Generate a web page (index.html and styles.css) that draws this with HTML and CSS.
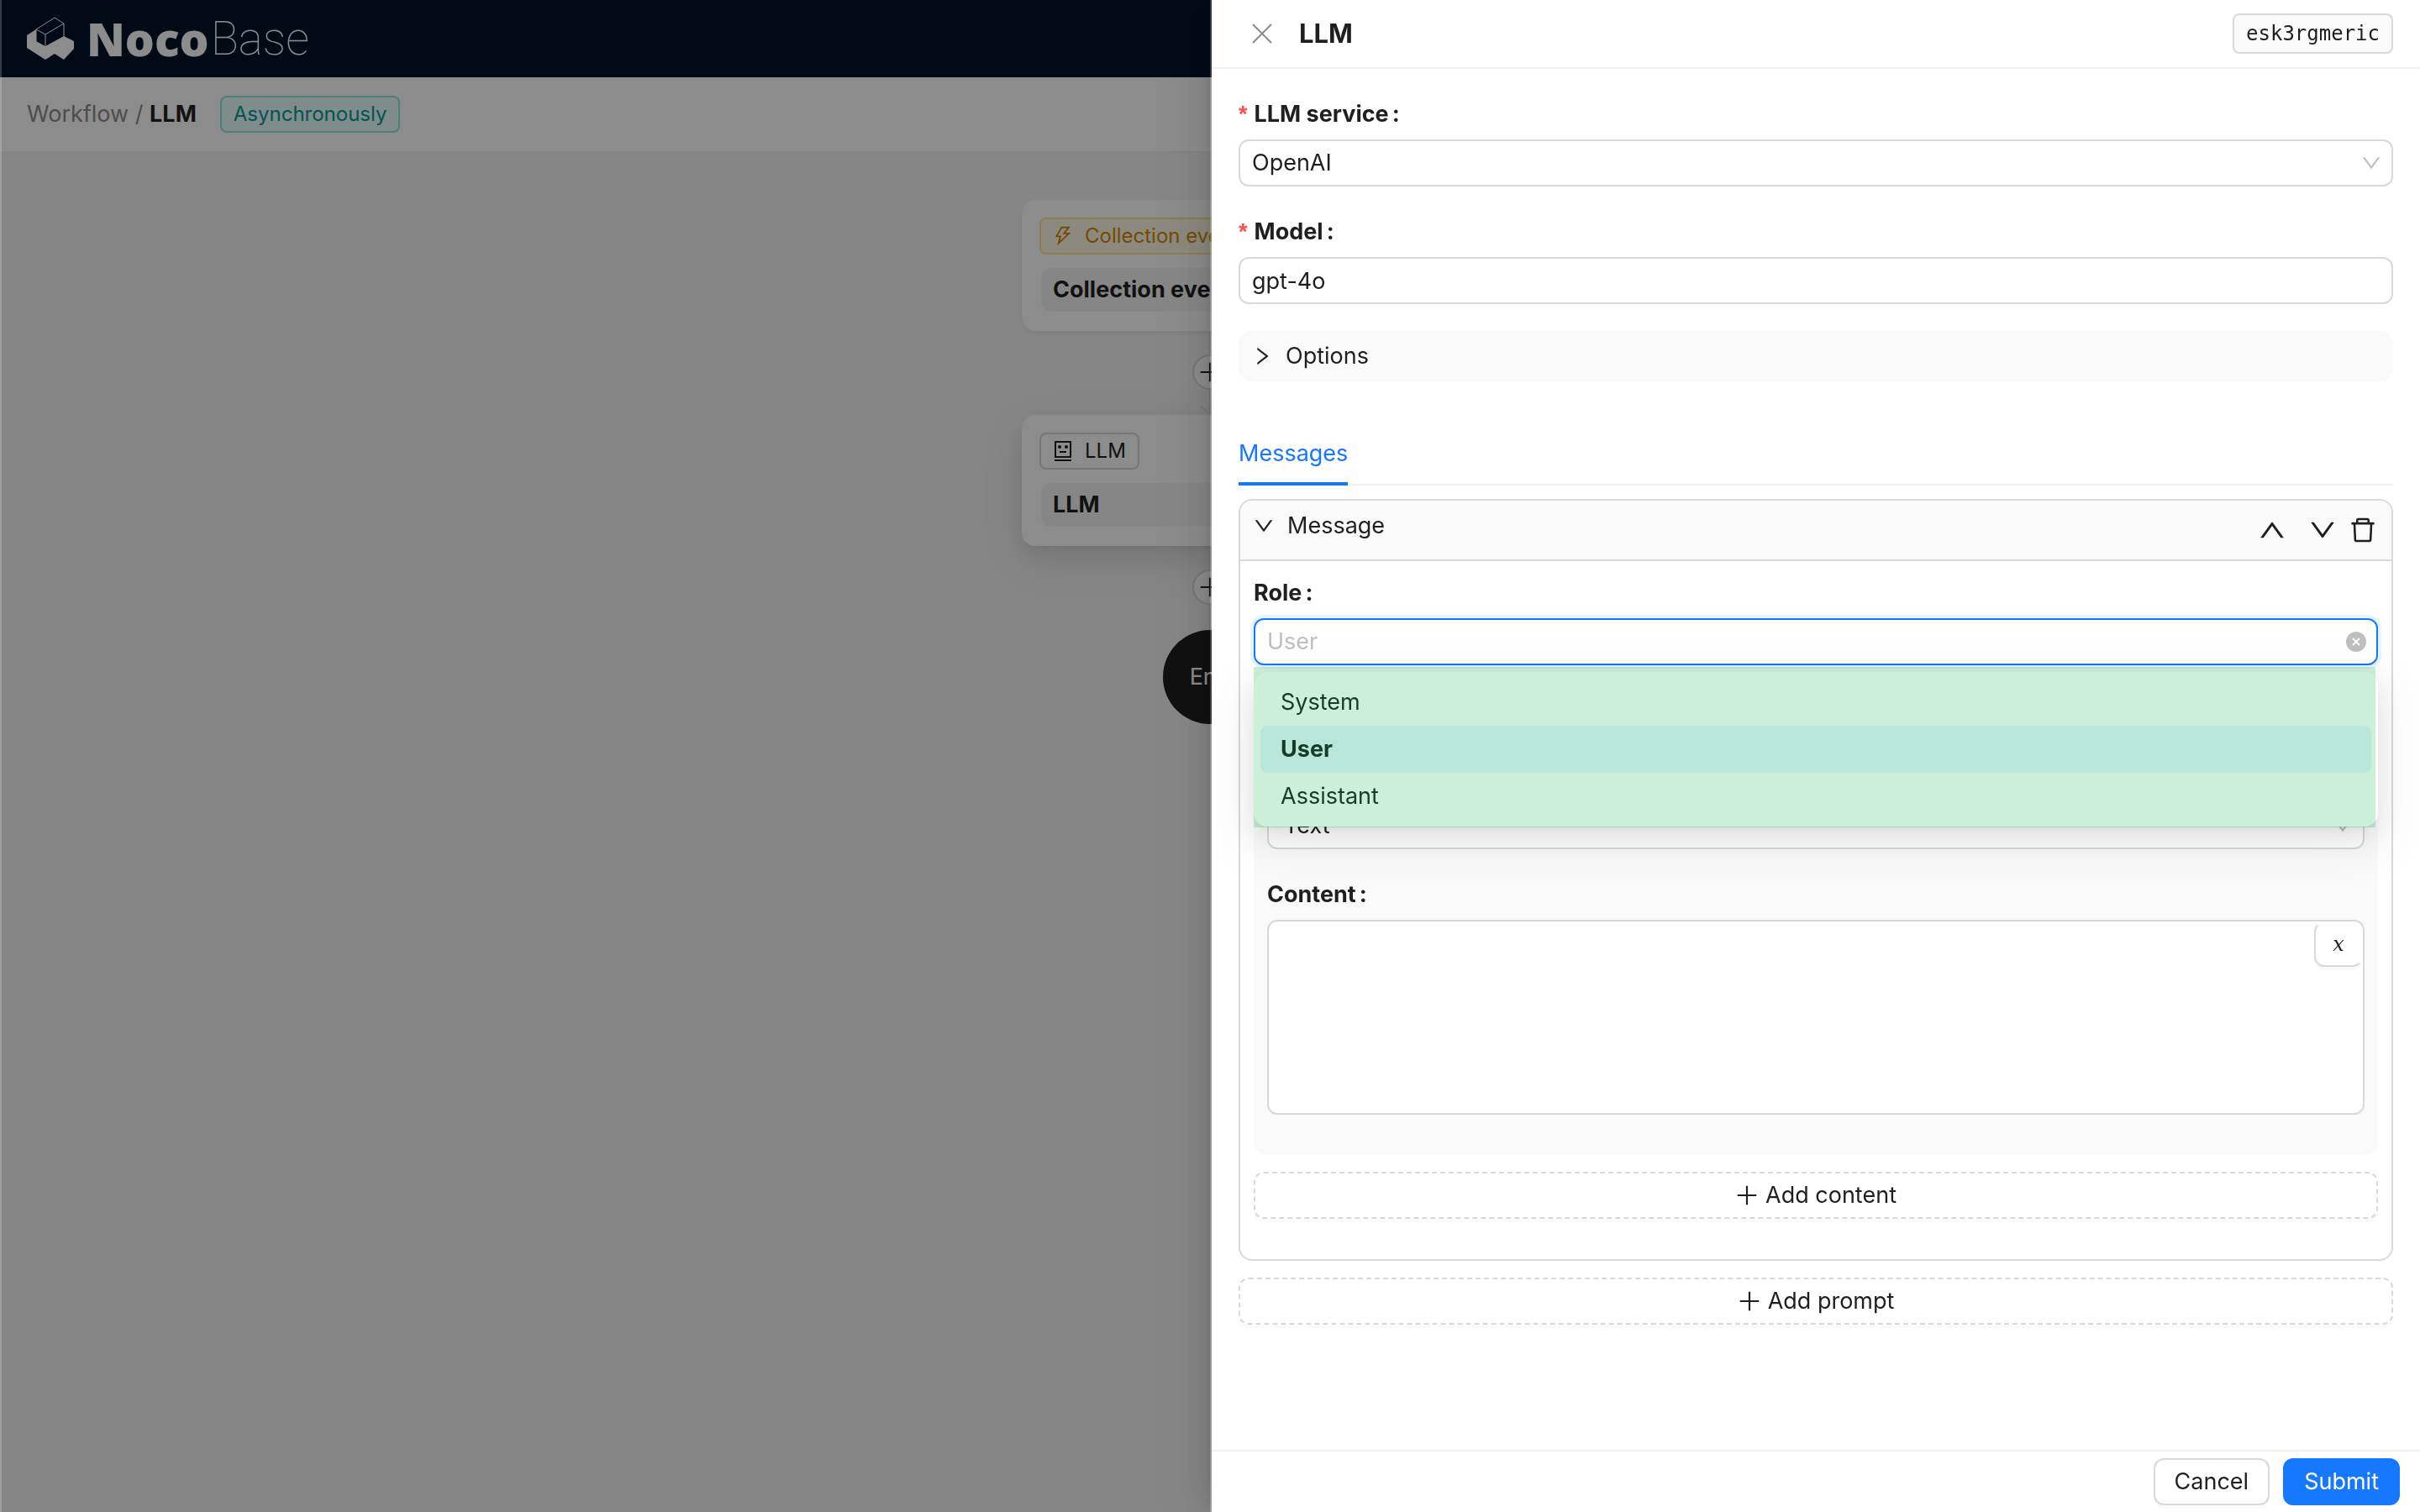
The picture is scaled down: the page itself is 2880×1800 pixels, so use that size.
FILE: index.html
```html
<!DOCTYPE html>
<html lang="en">
<head>
    <meta charset="UTF-8">
    <meta name="viewport" content="width=device-width, initial-scale=1.0">
    <title>NocoBase - LLM</title>
    <link rel="stylesheet" href="styles.css">
</head>
<body>
    <!-- icons shared by the page -->
    <svg class="sprite" aria-hidden="true">
        <symbol id="icon-down" viewBox="64 64 896 896"><path d="M884 256h-75c-5.1 0-9.9 2.5-12.9 6.6L512 654.2 227.9 262.6c-3-4.1-7.8-6.6-12.9-6.6h-75c-6.5 0-10.3 7.4-6.5 12.7l352.6 486.1c12.8 17.6 39 17.6 51.7 0l352.6-486.1c3.9-5.3.1-12.7-6.4-12.7z"/></symbol>
        <symbol id="icon-up" viewBox="64 64 896 896"><path d="M890.5 755.3L537.9 269.2c-12.8-17.6-39-17.6-51.7 0L133.5 755.3A8 8 0 00140 768h75c5.1 0 9.9-2.5 12.9-6.6L512 369.8l284.1 391.6c3 4.1 7.8 6.6 12.9 6.6h75c6.5 0 10.3-7.4 6.5-12.7z"/></symbol>
        <symbol id="icon-right" viewBox="64 64 896 896"><path d="M765.7 486.8L314.9 134.7A7.97 7.97 0 00302 141v77.3c0 4.9 2.3 9.6 6.1 12.6l360 281.1-360 281.1c-3.9 3-6.1 7.7-6.1 12.6V883c0 6.7 7.7 10.4 12.9 6.3l450.8-352.1a31.96 31.96 0 000-50.4z"/></symbol>
        <symbol id="icon-plus" viewBox="64 64 896 896"><path d="M477 152h70v720h-70zM152 477h720v70H152z"/></symbol>
        <symbol id="icon-delete" viewBox="64 64 896 896"><path d="M360 184h-8c4.4 0 8-3.6 8-8v8h304v-8c0 4.4 3.6 8 8 8h-8v72h72v-80c0-35.3-28.7-64-64-64H352c-35.3 0-64 28.7-64 64v80h72v-72zm504 72H160c-17.7 0-32 14.3-32 32v32c0 4.4 3.6 8 8 8h60.4l24.7 523c1.6 34.1 29.8 61 63.9 61h454c34.2 0 62.3-26.8 63.9-61l24.7-523H888c4.4 0 8-3.6 8-8v-32c0-17.7-14.3-32-32-32zM731.3 840H292.7l-24.2-512h487l-24.2 512z"/></symbol>
        <symbol id="icon-thunder" viewBox="64 64 896 896"><path d="M848 359.3H627.7L825.8 109c4.1-5.3.4-13-6.3-13H436c-2.8 0-5.5 1.5-6.9 4L170 547.5c-3.1 5.3.7 12 6.9 12h174.4l-89.4 357.6c-1.9 7.8 7.5 13.3 13.3 7.7L853.5 373c5.2-4.9 1.7-13.7-5.5-13.7zM378.2 732.5l60.3-241H281.1l189.6-327.4h224.6L487 427.4h211L378.2 732.5z"/></symbol>
    </svg>

    <div class="page">
        <header class="topbar">
            <svg class="logo-mark" viewBox="0 0 58 52">
                <path d="M1 22L12 15V29L23 35L45 23L57 29V38L45 51L34 44L23 51L1 37Z" fill="#fff"/>
                <path d="M12 15L34 1L45 8L23 21Z M12 15V29 M23 21V35 M45 8V23" fill="none" stroke="#fff" stroke-width="1"/>
            </svg>
            <div class="logo-text"><b>Noco</b><span>Base</span></div>
        </header>

        <div class="toolbar">
            <nav class="breadcrumb"><a href="#">Workflow</a> / <strong>LLM</strong></nav>
            <span class="tag tag-cyan">Asynchronously</span>
        </div>

        <main class="canvas">
            <div class="node">
                <span class="tag tag-gold"><svg class="icon"><use href="#icon-thunder"/></svg>Collection event</span>
                <div class="node-title">Collection event</div>
            </div>
            <div class="branch arrow">
                <button class="add" aria-label="Add node"><svg class="icon-md"><use href="#icon-plus"/></svg></button>
            </div>
            <div class="node active">
                <span class="tag">
                    <svg class="icon" viewBox="0 0 24 24">
                        <path d="M3 1H21V19H3Z M2 23H22 M8 13H16" fill="none" stroke="currentColor" stroke-width="2"/>
                        <circle cx="8" cy="7" r="2"/>
                        <circle cx="16" cy="7" r="2"/>
                    </svg>LLM</span>
                <div class="node-title">LLM</div>
            </div>
            <div class="branch">
                <button class="add" aria-label="Add node"><svg class="icon-md"><use href="#icon-plus"/></svg></button>
            </div>
            <div class="end">End</div>
        </main>
    </div>

    <div class="mask"></div>

    <aside class="drawer">
        <div class="drawer-header">
            <button class="close" aria-label="Close">
                <svg viewBox="0 0 32 32"><path d="M5 5L27 27M27 5L5 27" fill="none" stroke="currentColor" stroke-width="2"/></svg>
            </button>
            <h1>LLM</h1>
            <code class="key">esk3rgmeric</code>
        </div>

        <form class="drawer-body">
            <label class="label required" for="service">LLM service</label>
            <div class="select">
                <select id="service"><option>OpenAI</option></select>
                <svg class="icon"><use href="#icon-down"/></svg>
            </div>

            <label class="label required" for="model">Model</label>
            <input class="control" id="model" type="text" value="gpt-4o">

            <button type="button" class="options"><svg class="icon"><use href="#icon-right"/></svg>Options</button>

            <div class="tabs" role="tablist">
                <button type="button" class="tab" role="tab" aria-selected="true">Messages</button>
            </div>

            <section class="card">
                <div class="card-header">
                    <button type="button" class="card-title"><svg class="icon"><use href="#icon-down"/></svg>Message</button>
                    <div class="card-actions">
                        <button type="button" class="move" aria-label="Move up"><svg class="icon-lg"><use href="#icon-up"/></svg></button>
                        <button type="button" class="move" aria-label="Move down"><svg class="icon-lg"><use href="#icon-down"/></svg></button>
                        <button type="button" aria-label="Delete"><svg class="icon-lg"><use href="#icon-delete"/></svg></button>
                    </div>
                </div>
                <div class="card-body">
                    <label class="label" for="role">Role</label>
                    <div class="select focused">
                        <select id="role"><option>User</option></select>
                        <svg class="icon" viewBox="0 0 24 24">
                            <circle cx="12" cy="12" r="12"/>
                            <path d="M8 8L16 16M16 8L8 16" stroke="#fff" stroke-width="2"/>
                        </svg>
                        <div class="dropdown">
                            <ul role="listbox">
                                <li role="option">System</li>
                                <li role="option" aria-selected="true">User</li>
                                <li role="option">Assistant</li>
                            </ul>
                        </div>
                    </div>

                    <div class="panel">
                        <div class="select wide">
                            <select aria-label="Type"><option>Text</option></select>
                            <svg class="icon"><use href="#icon-down"/></svg>
                        </div>
                        <label class="label" for="content">Content</label>
                        <div class="editor">
                            <textarea class="control" id="content"></textarea>
                            <button type="button" class="variable" aria-label="Insert variable">x</button>
                        </div>
                    </div>

                    <button type="button" class="btn dashed"><svg class="icon-md"><use href="#icon-plus"/></svg>Add content</button>
                </div>
            </section>

            <button type="button" class="btn dashed"><svg class="icon-md"><use href="#icon-plus"/></svg>Add prompt</button>
        </form>

        <div class="drawer-footer">
            <button class="btn">Cancel</button>
            <button class="btn primary">Submit</button>
        </div>
    </aside>
</body>
</html>
```
FILE: styles.css
```css
* {
    box-sizing: border-box;
}
body {
    margin: 0;
    font-family: Inter, "Liberation Sans", sans-serif;
    font-size: 27px;
    line-height: 44px;
    color: #1f1f1f;
    background: #f5f5f5;
    overflow: hidden;
}
button,
input,
select,
textarea {
    font: inherit;
    color: inherit;
}
button {
    padding: 0;
    border: none;
    background: none;
    cursor: pointer;
}
svg {
    display: block;
    flex: none;
    fill: currentColor;
}
.sprite {
    position: absolute;
    width: 0;
    height: 0;
}
.icon {
    width: 24px;
    height: 24px;
}
.icon-md {
    width: 28px;
    height: 28px;
}
.icon-lg {
    width: 32px;
    height: 32px;
}

/* page behind the drawer */
.page {
    min-height: 100vh;
    display: flex;
    flex-direction: column;
}
.topbar {
    height: 92px;
    padding: 0 31px;
    display: flex;
    align-items: center;
    gap: 14px;
    background: #001529;
    color: #fff;
}
.logo-mark {
    width: 58px;
    height: 52px;
}
.logo-text {
    display: flex;
    gap: 2px;
    font-size: 55px;
}
.logo-text b {
    font-family: "Open Sans", sans-serif;
    font-weight: 800;
}
.logo-text span {
    font-family: Roboto, sans-serif;
    font-weight: 100;
}
.toolbar {
    height: 90px;
    padding: 0 32px;
    display: flex;
    align-items: center;
    gap: 28px;
    background: #fff;
    border-bottom: 2px solid #f0f0f0;
}
.breadcrumb {
    color: #8c8c8c;
}
.breadcrumb a {
    color: inherit;
    text-decoration: none;
}
.breadcrumb strong {
    color: #1f1f1f;
    font-weight: 700;
}
.tag {
    display: inline-flex;
    align-items: center;
    gap: 16px;
    height: 44px;
    padding: 0 14px;
    border: 2px solid #d9d9d9;
    border-radius: 8px;
    font-size: 24px;
    line-height: 40px;
    white-space: nowrap;
}
.tag-cyan {
    color: #08979c;
    background: #e6fffb;
    border-color: #87e8de;
}
.tag-gold {
    color: #d48806;
    background: #fffbe6;
    border-color: #ffe58f;
}
.canvas {
    flex: 1;
    padding-top: 56px;
    display: flex;
    flex-direction: column;
    align-items: center;
}
.node {
    width: 448px;
    height: 156px;
    padding: 21px;
    border-radius: 16px;
    background: #fff;
    box-shadow: 0 2px 4px rgba(0, 0, 0, 0.03), 0 2px 12px -2px rgba(0, 0, 0, 0.02), 0 4px 8px rgba(0, 0, 0, 0.02);
}
.node.active {
    box-shadow: 0 12px 32px rgba(0, 0, 0, 0.08), 0 6px 12px -8px rgba(0, 0, 0, 0.12), 0 18px 56px 16px rgba(0, 0, 0, 0.05);
}
.node .tag {
    display: flex;
    width: fit-content;
    gap: 14px;
}
.node-title {
    height: 52px;
    margin: 16px 2px 0;
    padding: 0 14px;
    border-radius: 12px;
    background: #f5f5f5;
    font-weight: 700;
    line-height: 52px;
}
.branch {
    height: 100px;
    padding-top: 28px;
    background: linear-gradient(#d9d9d9, #d9d9d9) center / 2px 100% no-repeat;
}
.add {
    display: flex;
    align-items: center;
    justify-content: center;
    width: 42px;
    height: 42px;
    border: 2px solid #d9d9d9;
    border-radius: 50%;
    background: #fff;
}
.arrow::after {
    content: "";
    display: block;
    width: 14px;
    height: 14px;
    margin: 12px auto 0;
    border: solid #d9d9d9;
    border-width: 0 2px 2px 0;
    transform: rotate(45deg);
}
.end {
    width: 112px;
    height: 112px;
    border-radius: 50%;
    background: #1f1f1f;
    color: #fff;
    text-align: center;
    line-height: 112px;
}
.mask {
    position: fixed;
    inset: 0;
    background: rgba(0, 0, 0, 0.45);
    border-left: 2px solid rgba(255, 255, 255, 0.2);
}

/* drawer */
.drawer {
    position: fixed;
    top: 0;
    right: 0;
    bottom: 0;
    width: 50%;
    display: flex;
    flex-direction: column;
    background: #fff;
    background-clip: padding-box;
    border-left: 2px solid rgba(255, 255, 255, 0.2);
    box-shadow: -12px 0 32px rgba(0, 0, 0, 0.08), -6px 0 12px -8px rgba(0, 0, 0, 0.12), -18px 0 56px 16px rgba(0, 0, 0, 0.05);
}
.drawer-header {
    display: flex;
    align-items: center;
    height: 82px;
    padding: 0 32px 0 44px;
    border-bottom: 2px solid #f0f0f0;
}
.close {
    width: 32px;
    height: 32px;
    color: #8c8c8c;
}
.drawer-header h1 {
    flex: 1;
    margin: 0 0 0 28px;
    font-size: 31px;
    font-weight: 700;
}
.key {
    height: 48px;
    padding: 0 14px;
    border: 2px solid #d9d9d9;
    border-radius: 8px;
    background: #fafafa;
    font-family: "DejaVu Sans Mono", monospace;
    font-size: 24px;
    line-height: 44px;
}
.drawer-body {
    flex: 1;
    padding: 32px;
}
.label {
    display: block;
    margin-bottom: 8px;
    font-weight: 700;
}
.label::after {
    content: ":";
    margin-left: 4px;
}
.required::before {
    content: "*";
    display: inline-block;
    margin-right: 8px;
    color: #ff4d4f;
    font-family: "Liberation Sans", sans-serif;
    font-weight: 700;
}
.control,
.select select {
    display: block;
    width: 100%;
    height: 56px;
    padding: 0 14px;
    border: 2px solid #d9d9d9;
    border-radius: 12px;
    background: #fff;
    outline: none;
}
.select {
    display: grid;
    align-items: center;
    position: relative;
    margin-bottom: 32px;
}
.select select,
.select > .icon {
    grid-area: 1 / 1;
}
.select select {
    appearance: none;
}
.select > .icon {
    justify-self: end;
    margin-right: 14px;
    color: #bfbfbf;
    pointer-events: none;
}
.select.wide select {
    padding: 0 18px;
}
.select.focused select {
    border-color: #1677ff;
    box-shadow: 0 0 0 4px rgba(5, 145, 255, 0.1);
    color: #bfbfbf;
}
.options {
    display: flex;
    align-items: center;
    gap: 16px;
    width: 100%;
    height: 60px;
    margin: 32px 0 48px;
    padding: 0 16px;
    border-radius: 16px;
    background: #fafafa;
}
.tabs {
    display: flex;
    margin-bottom: 16px;
    box-shadow: inset 0 -2px #f0f0f0;
}
.tab {
    padding: 16px 0 12px;
    border-bottom: 4px solid #1677ff;
    color: #1677ff;
}
.card {
    border: 2px solid #d9d9d9;
    border-radius: 16px;
}
.card-header {
    display: flex;
    justify-content: space-between;
    align-items: flex-start;
    padding: 8px 18px 8px 16px;
    border-bottom: 2px solid #d9d9d9;
    border-radius: 14px 14px 0 0;
    background: #fafafa;
}
.card-title {
    display: flex;
    align-items: center;
    gap: 16px;
}
.card-actions {
    display: flex;
    align-items: center;
    height: 54px;
    gap: 16px;
}
.card-actions .move:first-child {
    margin-right: 12px;
}
.card-body {
    padding: 16px 16px 48px;
}
.dropdown {
    position: absolute;
    z-index: 1;
    top: 100%;
    left: 0;
    right: 0;
    margin-top: 8px;
    padding: 8px;
    border-radius: 16px;
    background: #fff;
    box-shadow: 0 12px 32px rgba(0, 0, 0, 0.08), 0 6px 12px -8px rgba(0, 0, 0, 0.12), 0 18px 56px 16px rgba(0, 0, 0, 0.05);
}
/* green highlight over the open list */
.dropdown::after {
    content: "";
    position: absolute;
    inset: -6px 3px -1px 0;
    background: rgba(0, 176, 71, 0.2);
    pointer-events: none;
}
.dropdown ul {
    margin: 0;
    padding: 0;
    list-style: none;
}
.dropdown li {
    padding: 6px 24px;
    border-radius: 8px;
}
.dropdown li[aria-selected="true"] {
    background: #e6f4ff;
    font-weight: 700;
}
.panel {
    margin-bottom: 20px;
    padding: 131px 16px 48px;
    border-radius: 16px;
    background: #fafafa;
}
.editor {
    position: relative;
}
.editor textarea {
    height: 232px;
    padding: 8px 22px;
    resize: none;
}
.variable {
    position: absolute;
    top: 2px;
    right: 2px;
    width: 58px;
    height: 54px;
    border: 2px solid #d9d9d9;
    border-top-color: transparent;
    border-right-color: transparent;
    border-radius: 12px;
    background: #fff;
    box-shadow: 0 4px 0 rgba(0, 0, 0, 0.02);
    font-family: "DejaVu Serif", serif;
    font-size: 24px;
    font-style: italic;
}
.btn {
    display: flex;
    align-items: center;
    justify-content: center;
    gap: 8px;
    height: 56px;
    padding: 0 23px;
    border: 2px solid #d9d9d9;
    border-radius: 12px;
    background: #fff;
    box-shadow: 0 4px 0 rgba(0, 0, 0, 0.02);
}
.dashed {
    width: 100%;
    border-style: dashed;
}
.card + .dashed {
    margin-top: 20px;
}
.primary {
    border-color: #1677ff;
    background: #1677ff;
    box-shadow: none;
    color: #fff;
}
.drawer-footer {
    display: flex;
    justify-content: flex-end;
    gap: 16px;
    padding: 8px 24px;
    border-top: 2px solid #f0f0f0;
}
```
